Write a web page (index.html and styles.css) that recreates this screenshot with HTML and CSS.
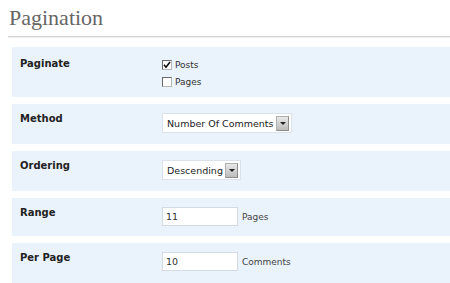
FILE: index.html
```html
<!DOCTYPE html>
<html>
<head>
<meta charset="utf-8">
<link rel="stylesheet" href="styles.css">
</head>
<body>
<div class="page">
  <h1 class="title">Pagination</h1>
  <div class="form">
    <div class="row row-tall">
      <div class="label label-tall">Paginate</div>
      <div class="checks">
        <div class="check"><span class="box"><svg width="8" height="8" viewBox="0 0 8 8"><path d="M1 3.8 L3 6.2 L7 1" fill="none" stroke="#111" stroke-width="1.6"/></svg></span><span>Posts</span></div>
        <div class="check"><span class="box"></span><span>Pages</span></div>
      </div>
    </div>
    <div class="row">
      <div class="label">Method</div>
      <div class="control">
        <div class="select select-wide"><span>Number Of Comments</span><span class="arrow"><span class="tri"></span></span></div>
      </div>
    </div>
    <div class="row">
      <div class="label">Ordering</div>
      <div class="control">
        <div class="select select-narrow"><span>Descending</span><span class="arrow"><span class="tri"></span></span></div>
      </div>
    </div>
    <div class="row row-short">
      <div class="label">Range</div>
      <div class="control">
        <input class="input" type="text" value="11"><span class="unit">Pages</span>
      </div>
    </div>
    <div class="row">
      <div class="label">Per Page</div>
      <div class="control">
        <input class="input" type="text" value="10"><span class="unit">Comments</span>
      </div>
    </div>
  </div>
</div>
</body>
</html>
```

FILE: styles.css
```css
body {
  margin: 0;
  background: #fff;
  font-family: "DejaVu Sans", Verdana, sans-serif;
}
.page {
  width: 450px;
  overflow: hidden;
}
.title {
  margin: 5px 0 0 8px;
  padding: 0 0 5px 1px;
  font: normal 22px/26px "Liberation Serif", "Times New Roman", serif;
  color: #666;
  border-bottom: 1px solid #d5d5d5;
  box-shadow: 0 1px 0 #eeeeee;
}
.form {
  margin: 10px 0 0 12px;
  display: flex;
  flex-direction: column;
  gap: 7px;
}
.row {
  display: flex;
  align-items: flex-start;
  height: 40px;
  box-sizing: border-box;
  padding: 9px 8px 0;
  background: #eaf2fb;
}
.row-tall { height: 50px; }
.row-short { height: 38px; }
.label {
  width: 142px;
  flex: none;
  font-weight: bold;
  font-size: 10px;
  line-height: 12px;
  color: #222;
}
.label-tall { margin-top: 2px; }
.checks {
  display: flex;
  flex-direction: column;
}
.check {
  display: flex;
  align-items: center;
  height: 17px;
  font-size: 9px;
  color: #333;
}
.box {
  width: 10px;
  height: 10px;
  box-sizing: border-box;
  border: 1px solid #6a6a6a;
  border-right-color: #b5b5b5;
  border-bottom-color: #b5b5b5;
  background: #fff;
  margin-right: 3px;
  display: flex;
  align-items: center;
  justify-content: center;
}
.control {
  display: flex;
  align-items: center;
}
.select {
  display: flex;
  align-items: center;
  justify-content: space-between;
  height: 20px;
  box-sizing: border-box;
  border: 1px solid #dde2e8;
  background: #fff;
  padding: 0 2px 0 4px;
  font-size: 9.5px;
  color: #222;
}
.select-wide { width: 130px; }
.select-narrow { width: 79px; }
.arrow {
  width: 13px;
  height: 15px;
  box-sizing: border-box;
  border: 1px solid #8c8c8c;
  border-top-color: #b0b0b0;
  border-left-color: #b0b0b0;
  background: linear-gradient(#e8e8e8, #bcbcbc);
  display: flex;
  align-items: center;
  justify-content: center;
}
.tri {
  width: 0;
  height: 0;
  border-left: 3px solid transparent;
  border-right: 3px solid transparent;
  border-top: 3px solid #222;
}
.input {
  width: 76px;
  height: 19px;
  box-sizing: border-box;
  margin: 0;
  border: 1px solid #d3dae2;
  background: #fff;
  padding: 0 3px;
  font-family: "DejaVu Sans", Verdana, sans-serif;
  font-size: 9.5px;
  color: #333;
  outline: none;
}
.unit {
  margin-left: 4px;
  font-size: 9px;
  color: #444;
}
```
